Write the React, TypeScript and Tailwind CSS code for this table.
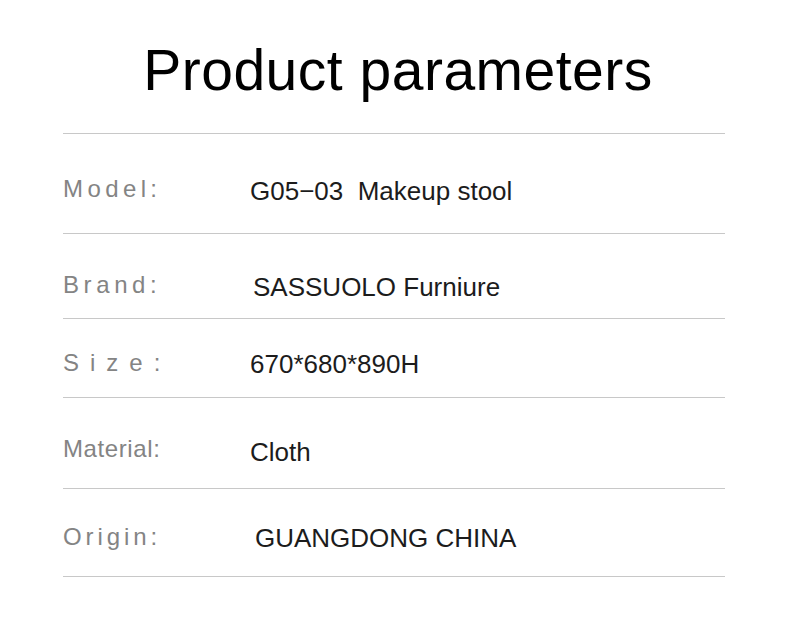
import React from "react";

type Row = {
  label: string;
  value: string;
  labelClass: string;
  valueClass: string;
  rowClass: string;
};

const rows: Row[] = [
  {
    label: "Model:",
    value: "G05\u221203\u00a0 Makeup stool",
    labelClass: "mt-[43px] tracking-[4.4px]",
    valueClass: "mt-[44px] ml-0",
    rowClass: "h-[100px]",
  },
  {
    label: "Brand:",
    value: "SASSUOLO Furniure",
    labelClass: "mt-[39px] tracking-[4.6px]",
    valueClass: "mt-[40px] ml-[3px]",
    rowClass: "h-[85px]",
  },
  {
    label: "Size:",
    value: "670*680*890H",
    labelClass: "mt-[32px] tracking-[11px]",
    valueClass: "mt-[32px] ml-0",
    rowClass: "h-[79px]",
  },
  {
    label: "Material:",
    value: "Cloth",
    labelClass: "mt-[39px] tracking-[0.6px]",
    valueClass: "mt-[41px] ml-0",
    rowClass: "h-[91px]",
  },
  {
    label: "Origin:",
    value: "GUANGDONG CHINA",
    labelClass: "mt-[36px] tracking-[3.9px]",
    valueClass: "mt-[36px] ml-[5px]",
    rowClass: "h-[88px]",
  },
];

export default function App() {
  return (
    <div
      className="w-[790px] h-[620px] bg-white overflow-hidden"
      style={{ fontFamily: '"Liberation Sans", Arial, Helvetica, sans-serif' }}
    >
      <div className="ml-[63px] w-[662px]">
        <h1 className="pt-[42px] pl-[8px] text-center text-[57px] leading-[57px] tracking-[0.5px] text-black font-normal h-[133px]">
          Product parameters
        </h1>
        <div className="border-t border-[#c8c8c8]">
          {rows.map((r) => (
            <div
              key={r.label}
              className={`flex items-start border-b border-[#c8c8c8] box-border ${r.rowClass}`}
            >
              <div className="w-[187px] shrink-0">
                <div
                  className={`text-[24px] leading-[24px] text-[#848484] whitespace-nowrap ${r.labelClass}`}
                >
                  {r.label}
                </div>
              </div>
              <div
                className={`text-[26px] leading-[26px] text-[#1c1c1c] whitespace-nowrap ${r.valueClass}`}
              >
                {r.value}
              </div>
            </div>
          ))}
        </div>
      </div>
    </div>
  );
}
